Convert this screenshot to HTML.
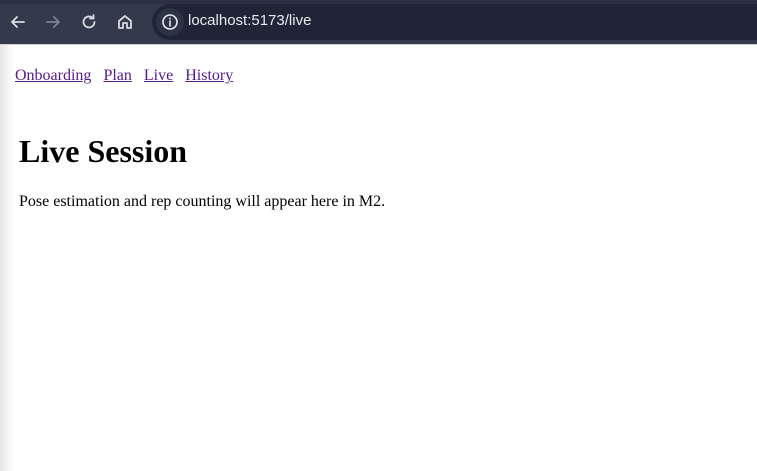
<!DOCTYPE html>
<html><head><meta charset="utf-8"><style>
html,body{margin:0;padding:0;width:757px;height:471px;overflow:hidden;background:#fff}
.bar{position:absolute;left:0;top:0;width:757px;height:44px;background:#333a4c;border-top:4px solid #2b3142;box-sizing:border-box}
.pill{position:absolute;left:152px;top:4px;width:640px;height:36px;border-radius:18px;background:#1f2536}
.info{position:absolute;left:156px;top:8px;width:28px;height:28px;border-radius:14px;background:#2c3345}
.url{position:absolute;left:188px;top:12px;font:15px "Liberation Sans",sans-serif;color:#e8eaf0}
.sep{position:absolute;left:0;top:44px;width:757px;height:1px;background:#d0d0d0}
.shadow{position:absolute;left:0;top:45px;width:14px;height:426px;background:linear-gradient(to right,#e6e6e6,#fff)}
.nav{position:absolute;left:15px;top:67px;font:16px "Liberation Serif",serif;white-space:nowrap}
.nav a{color:#551a8b;margin-right:8px}
h1{position:absolute;left:19px;top:133px;margin:0;font:bold 32px "Liberation Serif",serif;color:#000}
p{position:absolute;left:19px;top:193px;margin:0;font:16px "Liberation Serif",serif;color:#000}
svg{position:absolute}
</style></head><body>
<div class="bar"></div>
<svg style="left:8px;top:12px" width="20" height="20" viewBox="0 0 20 20" fill="none" stroke="#d8dbe2" stroke-width="1.8" stroke-linecap="round"><path d="M16 10H4M9 5L4 10L9 15"/></svg>
<svg style="left:43px;top:12px" width="20" height="20" viewBox="0 0 20 20" fill="none" stroke="#7d8394" stroke-width="1.8" stroke-linecap="round"><path d="M4 10H16M11 5L16 10L11 15"/></svg>
<svg style="left:79px;top:12px" width="20" height="20" viewBox="0 0 20 20" fill="none" stroke="#d8dbe2" stroke-width="1.8" stroke-linecap="round"><path d="M15.5 10A5.5 5.5 0 1 1 13.5 5.7"/><path d="M14.5 3V6.5H11" /></svg>
<svg style="left:115px;top:12px" width="20" height="20" viewBox="0 0 20 20" fill="none" stroke="#d8dbe2" stroke-width="1.8" stroke-linejoin="round"><path d="M4 9L10 4L16 9V16H12V11H8V16H4Z"/></svg>
<div class="pill"></div><div class="info"></div>
<svg style="left:160px;top:12px" width="20" height="20" viewBox="0 0 20 20" fill="none" stroke="#e8eaf0" stroke-width="1.6"><circle cx="10" cy="10" r="7"/><path d="M10 9V14M10 6.2V6.8" stroke-linecap="round"/></svg>
<div class="url">localhost:5173/live</div>
<div class="sep"></div>
<div class="shadow"></div>
<div class="nav"><a href="#">Onboarding</a> <a href="#">Plan</a> <a href="#">Live</a> <a href="#">History</a></div>
<h1>Live Session</h1>
<p>Pose estimation and rep counting will appear here in M2.</p>
</body></html>
